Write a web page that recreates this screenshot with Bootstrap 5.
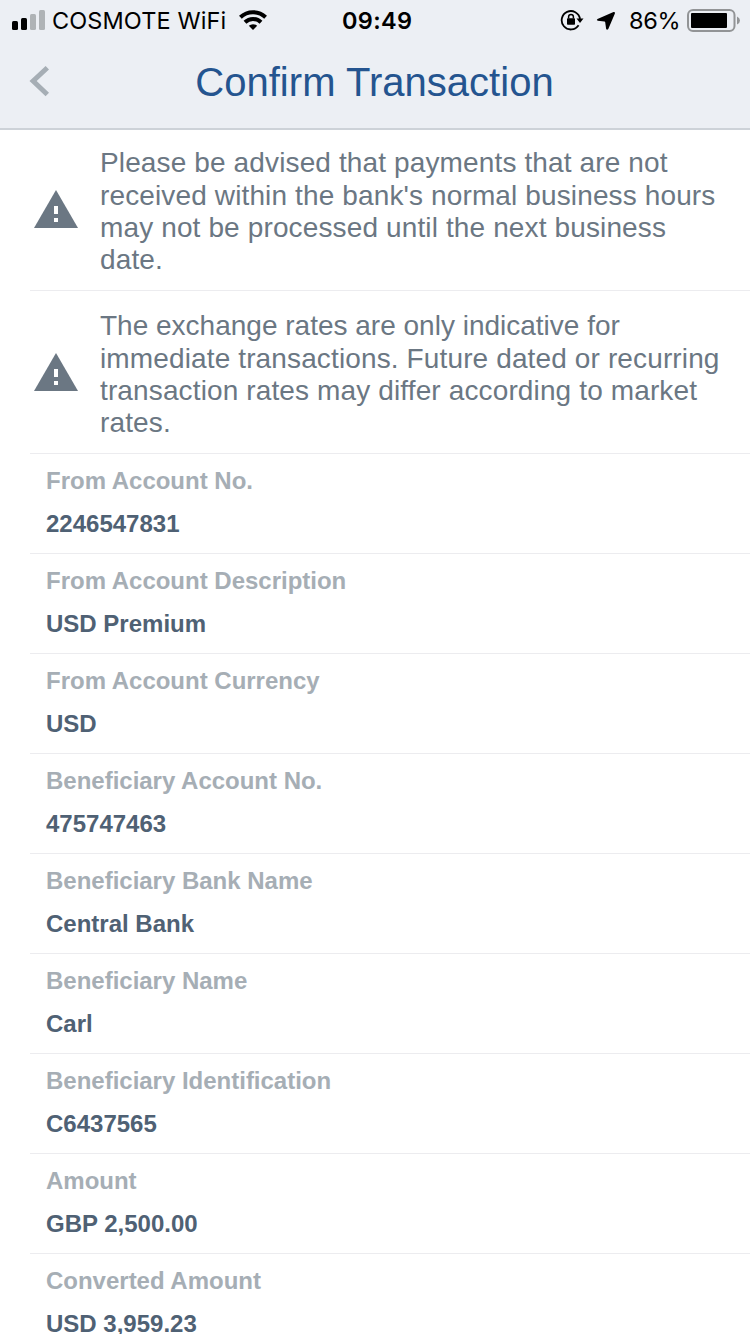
<!DOCTYPE html>
<html lang="en">
<head>
<meta charset="utf-8">
<meta name="viewport" content="width=device-width, initial-scale=1">
<title>Confirm Transaction</title>
<link href="https://cdn.jsdelivr.net/npm/bootstrap@5.3.0/dist/css/bootstrap.min.css" rel="stylesheet">
<style>
body { font-family: "Liberation Sans", Arial, sans-serif; height: 1334px; overflow: hidden; background: #fff; }
svg { display: block; flex: none; }
.app-head { height: 130px; background: #eceff4; border-bottom: 2px solid #cdd2d8; }
.status { height: 40px; font: 23.5px/41px Inter, sans-serif; color: #000; display: grid; grid-template: 40px / 330px 72px 1fr; padding: 0 10.5px 0 12px; }
.carrier { letter-spacing: .1px; margin-left: 7px; }
.wifi { margin-right: 75px; }
.clock { font-weight: 600; letter-spacing: .3px; }
.percent { margin-left: 13px; letter-spacing: -.2px; }
.battery { margin-left: 6px; }
.title-bar { height: 88px; padding-left: 29px; padding-right: 50px; }
.page-title { font-size: 40px; line-height: 85px; color: #24548f; letter-spacing: .03px; }
.rows { margin-left: 30px; }
.rows > .list-group-item { border-color: #ececef; border-width: 0 0 1px; padding: 0; background: none; }
.notice { height: 163px; }
.notice:first-child { height: 161px; }
.notice-text { font-size: 28px; line-height: 32.4px; color: #6b7783; margin-left: 22px; padding-top: 6px; white-space: nowrap; letter-spacing: .13px; }
.notice:first-child .notice-text { padding-top: 4px; }
.notice-text .snug { letter-spacing: 0; }
.notice svg { margin-left: 4px; }
.notice:first-child svg { margin-bottom: 2px; }
.field { height: 100px; font-weight: 700; font-size: 24px; }
.field dl { padding: 10px 16px 0; }
.field dt { line-height: 34px; color: #a6aeb5; letter-spacing: -.01px; }
.field dd { line-height: 34px; color: #4f6174; margin: 9px 0 0; }
</style>
</head>
<body>
<header class="app-head">
  <div class="status">
    <div class="d-flex align-items-center">
      <svg width="33" height="40" viewBox="12 0 33 40"><rect x="12" y="21" width="6" height="9" rx="1.5"/><rect x="21" y="18" width="6" height="12" rx="1.5"/><g fill="#afb3b6"><rect x="30" y="14" width="6" height="16" rx="1.5"/><rect x="39" y="10" width="6" height="20" rx="1.5"/></g></svg>
      <span class="carrier">COSMOTE WiFi</span>
      <svg class="ms-auto wifi" width="28" height="40" viewBox="239 0 28 40"><g fill="none" stroke="#000" stroke-width="4"><path d="M240.4 17.2a18.3 18.3 0 0 1 25.2 0"/><path d="M245 22.2a11.5 11.5 0 0 1 16 0"/></g><path d="M248.8 25.8a6.2 6.2 0 0 1 8.4 0L253 30z"/></svg>
    </div>
    <div class="clock">09:49</div>
    <div class="d-flex align-items-center justify-content-end">
      <svg width="56" height="40" viewBox="560 0 56 40"><path d="M578.6 25.3A9.2 9.2 0 1 1 580 19" fill="none" stroke="#000" stroke-width="1.8"/><path d="M576.5 18.5h7l-3.5 4.5z"/><rect x="567" y="18.3" width="8" height="6.5" rx=".8"/><path d="M568.6 18.5v-1.7a2.4 2.4 0 0 1 4.8 0v1.7" fill="none" stroke="#000" stroke-width="1.5"/><path d="M613.5 12q1.9-.5 1.4 1.4l-6.6 15.5q-1.4 1.7-2.2-.2l-.9-6.4q-.1-.7-.8-.8l-6.6-.8q-1.8-.8-.3-1.8z"/></svg>
      <span class="percent">86%</span>
      <svg class="battery" width="53" height="40" viewBox="686 0 53 40"><rect x="687" y="10" width="46.5" height="21" rx="5" fill="none" stroke="#929496" stroke-width="2"/><rect x="690" y="13" width="36" height="15" rx="1"/><path d="M736 16.5q3 1.5 3 4t-3 4z" fill="#929496"/></svg>
    </div>
  </div>
  <div class="title-bar d-flex">
    <svg width="20" height="84" viewBox="29 40 20 84"><path d="M45.6 66L49 69.4 36.7 81 49 92.8 45.6 96.2 29.5 81z" fill="#a6aeb5"/></svg>
    <h1 class="page-title flex-fill text-center m-0 fw-normal">Confirm Transaction</h1>
  </div>
</header>
<main>
  <div class="list-group list-group-flush rows">
    <div class="list-group-item notice d-flex align-items-center">
      <svg width="44" height="38" viewBox="0 0 44 38"><path d="M22 0l22 38H0z" fill="#6b7783"/><path d="M20 16h4v8h-4zM20 28h4v4h-4z" fill="#fff"/></svg>
      <div class="notice-text">Please be advised that payments that are not<br>received within the bank's normal business hours<br>may not be processed until the next business<br>date.</div>
    </div>
    <div class="list-group-item notice d-flex align-items-center">
      <svg width="44" height="38" viewBox="0 0 44 38"><path d="M22 0l22 38H0z" fill="#6b7783"/><path d="M20 16h4v8h-4zM20 28h4v4h-4z" fill="#fff"/></svg>
      <div class="notice-text"><span class="snug">The exchange rates are only indicative for</span><br>immediate transactions. Future dated or recurring<br>transaction rates may differ according to market<br>rates.</div>
    </div>
    <div class="list-group-item field"><dl class="m-0"><dt>From Account No.</dt><dd>2246547831</dd></dl></div>
    <div class="list-group-item field"><dl class="m-0"><dt>From Account Description</dt><dd>USD Premium</dd></dl></div>
    <div class="list-group-item field"><dl class="m-0"><dt>From Account Currency</dt><dd>USD</dd></dl></div>
    <div class="list-group-item field"><dl class="m-0"><dt>Beneficiary Account No.</dt><dd>475747463</dd></dl></div>
    <div class="list-group-item field"><dl class="m-0"><dt>Beneficiary Bank Name</dt><dd>Central Bank</dd></dl></div>
    <div class="list-group-item field"><dl class="m-0"><dt>Beneficiary Name</dt><dd>Carl</dd></dl></div>
    <div class="list-group-item field"><dl class="m-0"><dt>Beneficiary Identification</dt><dd>C6437565</dd></dl></div>
    <div class="list-group-item field"><dl class="m-0"><dt>Amount</dt><dd>GBP 2,500.00</dd></dl></div>
    <div class="list-group-item field"><dl class="m-0"><dt>Converted Amount</dt><dd>USD 3,959.23</dd></dl></div>
  </div>
</main>
<script src="https://cdn.jsdelivr.net/npm/bootstrap@5.3.0/dist/js/bootstrap.bundle.min.js"></script>
</body>
</html>
